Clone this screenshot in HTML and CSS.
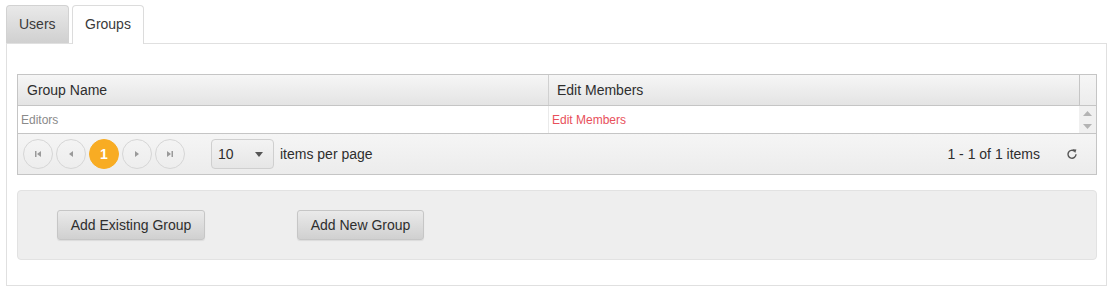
FILE: index.html
```html
<!DOCTYPE html>
<html>
<head>
<meta charset="utf-8">
<link rel="stylesheet" href="styles.css">
</head>
<body>
<div class="page">
  <div class="tabs">
    <div class="tab">Users</div>
    <div class="tab active">Groups</div>
  </div>
  <div class="panel">
    <div class="grid">
      <div class="grid-header">
        <div class="th col1">Group Name</div>
        <div class="th col2">Edit Members</div>
        <div class="th scroll-head"></div>
      </div>
      <div class="grid-body">
        <div class="td col1 muted">Editors</div>
        <div class="td col2"><a class="link" href="#">Edit Members</a></div>
        <div class="scrollbar">
          <svg width="9" height="5" viewBox="0 0 9 5"><path d="M4.5 0 L9 5 L0 5 Z" fill="#b3b3b3"/></svg>
          <svg width="9" height="5" viewBox="0 0 9 5"><path d="M0 0 L9 0 L4.5 5 Z" fill="#b3b3b3"/></svg>
        </div>
      </div>
      <div class="pager">
        <div class="pg-btn"><svg width="8" height="8" viewBox="0 0 8 8"><rect x="1" y="1" width="1.5" height="6" fill="#9a9a9a"/><path d="M7 1 L3 4 L7 7 Z" fill="#9a9a9a"/></svg></div>
        <div class="pg-btn"><svg width="8" height="8" viewBox="0 0 8 8"><path d="M6 1 L2 4 L6 7 Z" fill="#9a9a9a"/></svg></div>
        <div class="pg-btn current">1</div>
        <div class="pg-btn"><svg width="8" height="8" viewBox="0 0 8 8"><path d="M2 1 L6 4 L2 7 Z" fill="#9a9a9a"/></svg></div>
        <div class="pg-btn"><svg width="8" height="8" viewBox="0 0 8 8"><path d="M1 1 L5 4 L1 7 Z" fill="#9a9a9a"/><rect x="5.5" y="1" width="1.5" height="6" fill="#9a9a9a"/></svg></div>
        <div class="pg-select"><span>10</span><svg width="8" height="5" viewBox="0 0 8 5"><path d="M0 0 L8 0 L4 5 Z" fill="#555"/></svg></div>
        <span class="pg-label">items per page</span>
        <span class="pg-info">1 - 1 of 1 items</span>
        <span class="pg-refresh"><svg width="12" height="12" viewBox="0 0 12 12"><path d="M8.6 3.2 A4 4 0 1 0 10 6.3" fill="none" stroke="#555" stroke-width="1.4"/><path d="M6.6 1.2 L10.4 1.6 L9.2 5 Z" fill="#555"/></svg></span>
      </div>
    </div>
    <div class="actions">
      <button class="btn">Add Existing Group</button>
      <button class="btn">Add New Group</button>
    </div>
  </div>
</div>
</body>
</html>
```

FILE: styles.css
```css
html, body {
  margin: 0;
  padding: 0;
  background: #fff;
}
body {
  font-family: "Liberation Sans", Arial, sans-serif;
  font-size: 14px;
  color: #2e2e2e;
}
.page {
  padding: 5px 8px 0 6px;
}
.tabs {
  display: flex;
  align-items: flex-end;
  gap: 3px;
  height: 38px;
  position: relative;
  z-index: 1;
}
.tab {
  box-sizing: border-box;
  height: 38px;
  width: 63px;
  padding: 10px 0 0 12px;
  border: 1px solid #d2d2d2;
  border-bottom: none;
  border-radius: 4px 4px 0 0;
  background: linear-gradient(#e9e9e9, #d0d0d0);
  color: #3a3a3a;
}
.tab.active {
  height: 39px;
  margin-bottom: -1px;
  background: #fff;
  border-color: #dcdcdc;
  padding: 10px 0 0 12px;
  width: 72px;
}
.panel {
  border: 1px solid #e0e0e0;
  padding: 30px 9px 25px 10px;
}
.grid {
  border: 1px solid #c5c5c5;
}
.grid-header {
  display: flex;
  height: 30px;
  background: linear-gradient(#f6f6f6, #e4e4e4);
  border-bottom: 1px solid #c5c5c5;
}
.th {
  box-sizing: border-box;
  display: flex;
  align-items: center;
  padding-left: 9px;
}
.col1 {
  width: 531px;
  border-right: 1px solid #d0d0d0;
  flex: none;
}
.col2 {
  flex: 1;
}
.th.col2 {
  padding-left: 8px;
}
.scroll-head {
  width: 17px;
  flex: none;
  border-left: 1px solid #c5c5c5;
  padding: 0;
  background: linear-gradient(#f6f6f6, #ececec);
}
.grid-body {
  display: flex;
  height: 27px;
  background: #fff;
  border-bottom: 1px solid #c5c5c5;
}
.td {
  box-sizing: border-box;
  display: flex;
  align-items: center;
  font-size: 12px;
  padding-left: 3px;
}
.td.col1 {
  border-right: 1px solid #eaeaea;
}
.td.col2 {
  padding-left: 3px;
}
.muted {
  color: #8a8a8a;
}
.link {
  color: #e8505b;
  text-decoration: none;
}
.scrollbar {
  width: 17px;
  flex: none;
  background: #f0f0f0;
  display: flex;
  flex-direction: column;
  align-items: center;
  justify-content: space-between;
  padding: 5px 0 4px;
  box-sizing: border-box;
}
.pager {
  display: flex;
  align-items: center;
  height: 40px;
  background: linear-gradient(#f5f5f5, #ececec);
  padding-left: 5px;
  padding-right: 18px;
}
.pg-btn {
  box-sizing: border-box;
  width: 30px;
  height: 30px;
  border-radius: 50%;
  border: 1px solid #d6d6d6;
  display: flex;
  align-items: center;
  justify-content: center;
  margin-right: 3px;
  font-size: 14px;
}
.pg-btn.current {
  background: #f8ac23;
  border-color: #f8ac23;
  color: #fff;
  font-weight: bold;
}
.pg-select {
  box-sizing: border-box;
  margin-left: 23px;
  width: 63px;
  height: 30px;
  border: 1px solid #cfcfcf;
  border-radius: 4px;
  background: linear-gradient(#f3f3f3, #e6e6e6);
  display: flex;
  align-items: center;
  justify-content: space-between;
  padding: 0 10px 0 6px;
  font-size: 14px;
}
.pg-label {
  margin-left: 6px;
}
.pg-info {
  margin-left: auto;
  margin-right: 26px;
}
.pg-refresh {
  display: flex;
  align-items: center;
}
.actions {
  margin-top: 15px;
  background: #eeeeee;
  border: 1px solid #e2e2e2;
  border-radius: 4px;
  display: flex;
  align-items: flex-start;
  padding: 19px 0 0 39px;
  box-sizing: border-box;
  height: 70px;
  gap: 92px;
}
.btn {
  font-family: "Liberation Sans", Arial, sans-serif;
  font-size: 14px;
  color: #2e2e2e;
  height: 30px;
  padding: 0 12px;
  border: 1px solid #c6c6c6;
  border-radius: 3px;
  background: linear-gradient(#eaeaea, #d0d0d0);
  box-shadow: 0 1px 1px rgba(0,0,0,0.08);
}
.btn:first-child {
  width: 148px;
}
.btn:last-child {
  width: 127px;
}
```
